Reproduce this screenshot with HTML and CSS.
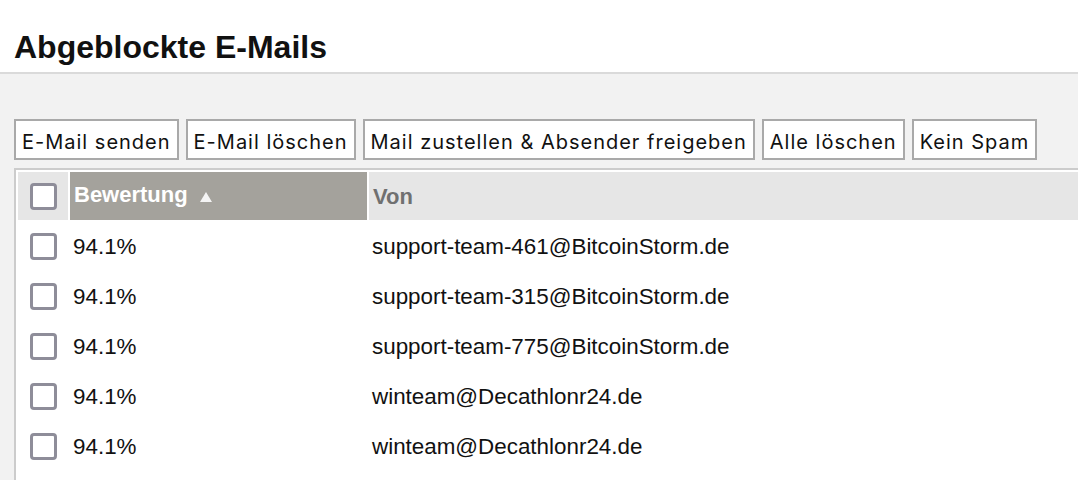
FILE: index.html
```html
<!DOCTYPE html>
<html lang="de">
<head>
<meta charset="utf-8">
<title>Abgeblockte E-Mails</title>
<link rel="stylesheet" href="styles.css">
</head>
<body>
<header class="titlebar">
  <h1>Abgeblockte E-Mails</h1>
</header>
<main class="main">
  <div class="toolbar">
    <button class="btn">E-Mail senden</button>
    <button class="btn">E-Mail löschen</button>
    <button class="btn">Mail zustellen &amp; Absender freigeben</button>
    <button class="btn">Alle löschen</button>
    <button class="btn">Kein Spam</button>
  </div>
  <div class="panel">
    <table class="list">
      <thead>
        <tr>
          <th class="sel"><span class="cb"></span></th>
          <th class="score sorted">Bewertung<span class="arrow"></span></th>
          <th class="from">Von</th>
        </tr>
      </thead>
      <tbody>
        <tr><td class="sel"><span class="cb"></span></td><td>94.1%</td><td>support-team-461@BitcoinStorm.de</td></tr>
        <tr><td class="sel"><span class="cb"></span></td><td>94.1%</td><td>support-team-315@BitcoinStorm.de</td></tr>
        <tr><td class="sel"><span class="cb"></span></td><td>94.1%</td><td>support-team-775@BitcoinStorm.de</td></tr>
        <tr><td class="sel"><span class="cb"></span></td><td>94.1%</td><td>winteam@Decathlonr24.de</td></tr>
        <tr><td class="sel"><span class="cb"></span></td><td>94.1%</td><td>winteam@Decathlonr24.de</td></tr>
      </tbody>
    </table>
  </div>
</main>
</body>
</html>
```
FILE: styles.css
```css
html, body {
  margin: 0;
  height: 100%;
  overflow: hidden;
  background: #f2f2f2;
}

.titlebar {
  background: #fff;
  padding: 29px 14px 6px;
  border-bottom: 2px solid #dadada;
}

.titlebar h1 {
  margin: 0;
  font: bold 32px/37px "Liberation Sans", Arial, sans-serif;
  color: #111;
}

.main {
  padding: 45px 0 0 14px;
}

.toolbar {
  display: flex;
  gap: 7px;
  margin-bottom: 8px;
}

.btn {
  box-sizing: border-box;
  height: 41px;
  padding: 4px 6px 0;
  border: 2px solid #a9a9a9;
  border-radius: 0;
  background: #fff;
  color: #111;
  font-family: Inter, "Liberation Sans", sans-serif;
  font-size: 20px;
  letter-spacing: 1px;
  white-space: nowrap;
}

.panel {
  background: #fff;
  border-top: 2px solid #cccccc;
  border-left: 2px solid #cccccc;
  min-height: 400px;
}

.list {
  border-collapse: separate;
  border-spacing: 2px;
  width: 1100px;
  font: 22.4px/25px "Liberation Sans", Arial, sans-serif;
  color: #111;
}

.list th,
.list td {
  padding: 0 0 0 3px;
  text-align: left;
  height: 48px;
}

.list th {
  background: #e6e6e6;
  font-weight: bold;
  font-size: 22px;
  color: #707070;
  padding-left: 4px;
}

.list th.sorted {
  background: #a4a29c;
  color: #fff;
  vertical-align: top;
  padding-top: 10px;
  height: 38px;
}

.list .sel {
  width: 50px;
  padding: 0;
  text-align: center;
}

.list .score {
  width: 293px;
}

.arrow {
  display: inline-block;
  margin-left: 12px;
  width: 0;
  height: 0;
  border-left: 6px solid transparent;
  border-right: 6px solid transparent;
  border-bottom: 10px solid #f4f4f4;
}

.cb {
  display: block;
  box-sizing: border-box;
  width: 27px;
  height: 27px;
  margin: 0 auto;
  border: 3px solid #8e8d99;
  border-radius: 4px;
  background: #fff;
}
```
